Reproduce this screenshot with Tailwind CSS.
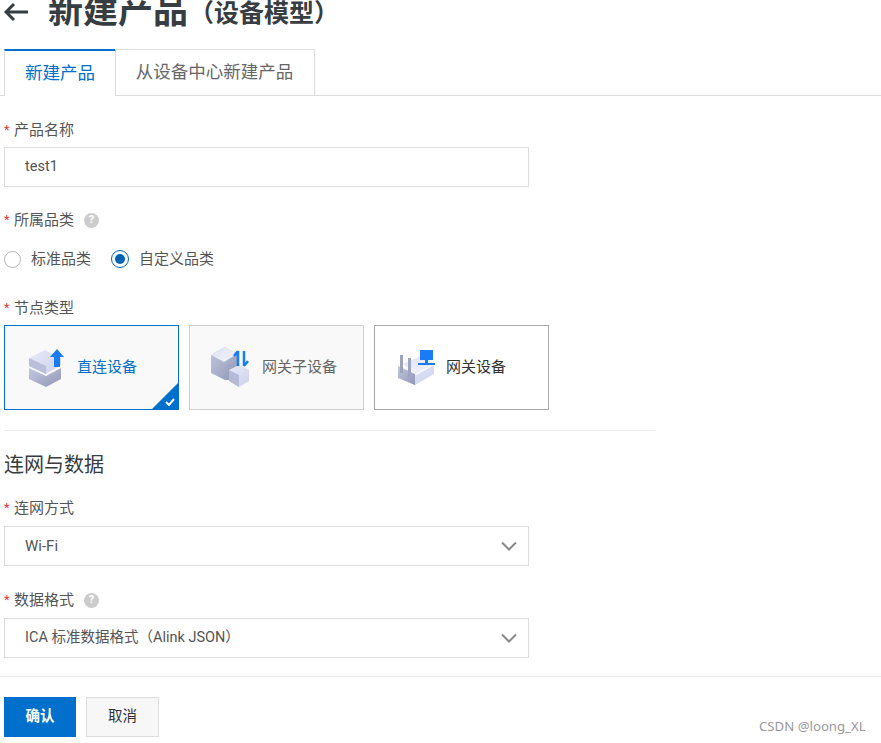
<!DOCTYPE html>
<html lang="zh"><head><meta charset="utf-8"><script src="https://cdn.jsdelivr.net/npm/@tailwindcss/browser@4"></script></head>
<body class="bg-white">
<div class="relative w-[881px] h-[743px] overflow-hidden bg-white font-['Roboto','Noto_Sans_CJK_SC',sans-serif] text-[#555]">
  <svg width="0" height="0" class="absolute"><defs>
    <linearGradient id="gTop" x1="0" y1="0" x2="1" y2="1"><stop offset="0" stop-color="#e8eafa"/><stop offset="1" stop-color="#cdd2ea"/></linearGradient>
    <linearGradient id="gSide" x1="0" y1="0" x2="1" y2="1"><stop offset="0" stop-color="#c4c9e2"/><stop offset="1" stop-color="#9096b4"/></linearGradient>
    <linearGradient id="gLight" x1="0" y1="0" x2="1" y2="1"><stop offset="0" stop-color="#dfe2f5"/><stop offset="1" stop-color="#f2f3fb"/></linearGradient>
  </defs></svg>
  <div class="h-[49px] flex items-start pl-[4px]">
    <div class="flex items-center h-[24px] text-[#373d41] font-bold">
      <svg width="25" height="24" viewBox="0 0 25 24" fill="none" stroke="#373d41" stroke-width="3"><path d="M24 12H2M10 4L2 12L10 20"/></svg>
      <span class="ml-[19px] text-[35px] leading-[24px] whitespace-nowrap">新建产品</span>
      <span class="text-[25px] leading-[24px] ml-[1px] mt-[4px] whitespace-nowrap">（设备模型）</span>
    </div>
  </div>
  <div class="h-[47px] flex items-stretch pl-[4px] border-b border-[#dcdcdc] text-[17.500px]">
    <div class="w-[112px] -mb-px bg-white border-l border-r border-[#dcdcdc] border-t-2 border-t-[#0070cc] text-[#0070cc] flex items-center justify-center">新建产品</div>
    <div class="w-[200px] -ml-px -mb-px border border-l-0 border-[#dcdcdc] text-[#666] flex items-center justify-center">从设备中心新建产品</div>
  </div>
  <div class="pl-[4px] pt-[25px] text-[15px]">
    <div class="h-[18px] flex items-center"><span class="text-[#e4393c] w-[10px] text-[13px]">*</span><span>产品名称</span></div>
    <div class="mt-[8px] w-[525px] h-[40px] border border-[#dcdcdc] pl-[20px] flex items-center text-[14.500px]">test1</div>
    <div class="mt-[24px] h-[18px] flex items-center"><span class="text-[#e4393c] w-[10px] text-[13px]">*</span><span>所属品类</span>
      <span class="ml-[10px] w-[15px] h-[15px] rounded-full bg-[#cccccc] text-white text-[11px] font-bold flex items-center justify-center">?</span></div>
    <div class="mt-[21px] h-[18px] flex items-center">
      <span class="w-[17px] h-[17px] rounded-full border border-[#b5b5b5]"></span><span class="ml-[10px]">标准品类</span>
      <span class="ml-[20px] w-[18px] h-[18px] rounded-full border border-[#0064b4] flex items-center justify-center"><span class="w-[10px] h-[10px] rounded-full bg-[#0064b4]"></span></span><span class="ml-[10px]">自定义品类</span>
    </div>
    <div class="mt-[31px] h-[18px] flex items-center"><span class="text-[#e4393c] w-[10px] text-[13px]">*</span><span>节点类型</span></div>
    <div class="mt-[8px] flex gap-[10px]">
      <div class="relative w-[175px] h-[85px] border border-[#0070cc] bg-[#f9f9f9] flex items-center pl-[23px] text-[#0070cc]">
        <svg width="36" height="40" viewBox="0 0 36 40"><path d="M1 20L18 28L33 20V31L18 39L1 31Z" fill="url(#gSide)"/><path d="M1 10L17 2L33 10V17L18 26L1 18Z" fill="url(#gTop)"/><path d="M1 10L18 18V26L1 18Z" fill="#b9bedb"/><path d="M29 1L36 9H32V19H26V9H22Z" fill="#1a7cf5"/></svg>
        <span class="ml-[13px]">直连设备</span>
        <span class="absolute right-0 bottom-0 w-0 h-0 border-l-[26px] border-l-transparent border-b-[26px] border-b-[#0070cc]"></span>
        <svg class="absolute right-[3px] bottom-[3px]" width="10" height="8" viewBox="0 0 10 8" fill="none" stroke="#fff" stroke-width="2"><path d="M1 4L4 7L9 1"/></svg>
      </div>
      <div class="w-[175px] h-[85px] border border-[#d0d0d0] bg-[#f9f9f9] flex items-center pl-[21px] text-[#666]">
        <svg width="39" height="41" viewBox="0 0 39 41"><path d="M0 8L14 0L26 7V22L18 33L14 33L0 26Z" fill="url(#gSide)"/><path d="M0 8L14 0L26 7L13 15Z" fill="url(#gLight)"/><path d="M18 23L28 18L38 23V34L28 40L18 34Z" fill="url(#gTop)"/><path d="M18 23L28 28V40L18 34Z" fill="#b5bad6"/><path d="M27 4V19M27 4L23 9M33 4V19M33 19L37 14" stroke="#1a7cf5" stroke-width="2.500" fill="none"/></svg>
        <span class="ml-[12px]">网关子设备</span>
      </div>
      <div class="w-[175px] h-[85px] border border-[#a8a8a8] bg-white flex items-center pl-[22px] text-[#333]">
        <svg width="38" height="36" viewBox="0 0 38 36"><path d="M1 18L19 25L37 15V24L18 35L1 28Z" fill="url(#gTop)"/><path d="M6 14L24 6L37 14L19 24Z" fill="url(#gLight)"/><path d="M1 16L18 24V35L1 28Z" fill="url(#gSide)"/><path d="M3 5H6V23H3ZM11 8H14V27H11Z" fill="#9ea3bf"/><rect x="23" y="0" width="13" height="10" fill="#1a7cf5"/><rect x="28" y="10" width="3" height="3" fill="#1a7cf5"/><rect x="21" y="13" width="17" height="2" fill="#1a7cf5"/></svg>
        <span class="ml-[11px]">网关设备</span>
      </div>
    </div>
    <div class="mt-[20px] w-[651px] border-t border-[#ececec]"></div>
    <div class="mt-[21px] h-[26px] leading-[26px] text-[20px] text-[#373d41]">连网与数据</div>
    <div class="mt-[21px] h-[18px] flex items-center"><span class="text-[#e4393c] w-[10px] text-[13px]">*</span><span>连网方式</span></div>
    <div class="mt-[9px] w-[525px] h-[40px] border border-[#dcdcdc] pl-[20px] pr-[11px] flex items-center justify-between">Wi-Fi
      <svg width="16" height="10" viewBox="0 0 16 10" fill="none" stroke="#888" stroke-width="2"><path d="M1 1.500L8 8.500L15 1.500"/></svg></div>
    <div class="mt-[25px] h-[18px] flex items-center"><span class="text-[#e4393c] w-[10px] text-[13px]">*</span><span>数据格式</span>
      <span class="ml-[10px] w-[15px] h-[15px] rounded-full bg-[#cccccc] text-white text-[11px] font-bold flex items-center justify-center">?</span></div>
    <div class="mt-[9px] w-[525px] h-[40px] border border-[#dcdcdc] pl-[20px] pr-[11px] flex items-center justify-between"><span class="text-[14.500px]">ICA 标准数据格式（Alink JSON）</span>
      <svg width="16" height="10" viewBox="0 0 16 10" fill="none" stroke="#888" stroke-width="2"><path d="M1 1.500L8 8.500L15 1.500"/></svg></div>
  </div>
  <div class="mt-[18px] h-[67px] border-t border-[#eeeeee] shadow-[0_-2px_3px_rgba(0,0,0,0.03)] pl-[4px] pt-[20px] flex gap-[10px] text-[14.500px]">
    <div class="w-[72px] h-[40px] bg-[#0070cc] text-white font-bold flex items-center justify-center">确认</div>
    <div class="w-[73px] h-[40px] bg-[#f7f7f7] border border-[#dcdcdc] text-[#333] flex items-center justify-center">取消</div>
  </div>
  <div class="absolute left-[759px] top-[717px] text-[13.200px] leading-[18px] text-[#999] font-['Noto_Sans',sans-serif] whitespace-nowrap">CSDN @loong_XL</div>
</div>
</body></html>
